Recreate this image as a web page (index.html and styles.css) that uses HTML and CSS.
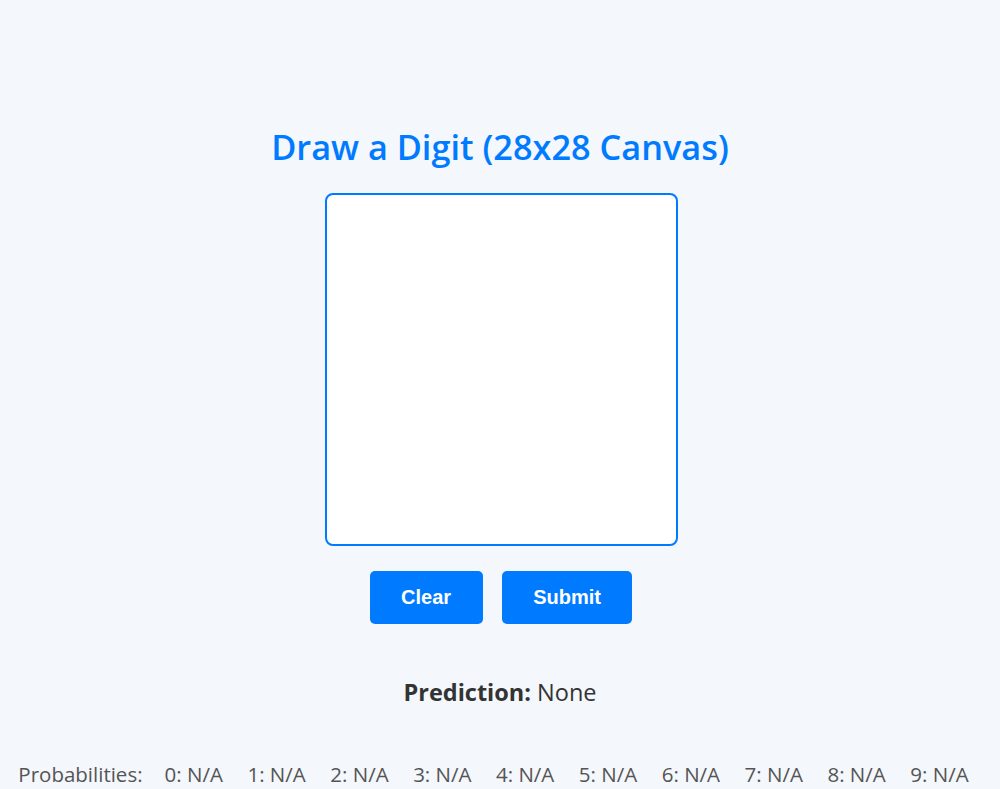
FILE: index.html
```html
<!DOCTYPE html>
<html lang="en">
<head>
<meta charset="utf-8">
<title>Draw a Digit</title>
<link rel="stylesheet" href="styles.css">
</head>
<body>
<main class="app">
  <h1 class="title">Draw a Digit (28x28 Canvas)</h1>
  <div class="canvas-box"></div>
  <div class="actions">
    <button class="btn">Clear</button>
    <button class="btn">Submit</button>
  </div>
  <p class="prediction"><strong>Prediction:</strong> None</p>
  <div class="probs">
    <span class="probs-label">Probabilities:</span>
    <span>0: N/A</span>
    <span>1: N/A</span>
    <span>2: N/A</span>
    <span>3: N/A</span>
    <span>4: N/A</span>
    <span>5: N/A</span>
    <span>6: N/A</span>
    <span>7: N/A</span>
    <span>8: N/A</span>
    <span>9: N/A</span>
  </div>
</main>
</body>
</html>
```
FILE: styles.css
```css
html, body {
  margin: 0;
  padding: 0;
  background: #f4f7fb;
}
body {
  font-family: "Open Sans", "Noto Sans", sans-serif;
  color: #333;
}
.app {
  display: flex;
  flex-direction: column;
  align-items: center;
  padding-top: 124px;
}
.title {
  margin: 0;
  font-size: 34.3px;
  font-weight: 600;
  color: #007bff;
  line-height: 46px;
}
.canvas-box {
  margin-top: 23px;
  width: 349px;
  height: 349px;
  background: #fff;
  border: 2px solid #007bff;
  border-radius: 8px;
  transform: translateX(1px);
}
.actions {
  display: flex;
  gap: 19px;
  margin-top: 25px;
  padding-left: 2px;
}
.btn {
  font-family: "Liberation Sans", Arial, sans-serif;
  font-weight: bold;
  font-size: 20px;
  line-height: 23px;
  color: #fff;
  background: #007bff;
  border: none;
  border-radius: 5px;
  padding: 15px 31.5px;
}
.prediction {
  margin: 52px 0 0;
  font-size: 23.5px;
  line-height: 32px;
}
.prediction strong {
  font-weight: 700;
}
.probs {
  margin-top: 52px;
  display: flex;
  gap: 24.5px;
  padding-right: 13px;
  font-size: 20.5px;
  color: #555;
  line-height: 28px;
}
.probs-label {
  margin-right: -2.5px;
}
```
